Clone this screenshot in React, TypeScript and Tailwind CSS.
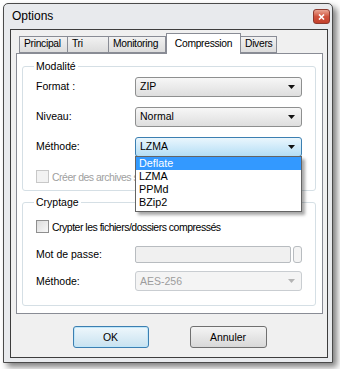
import type { ReactNode } from "react";

function Arrow({ disabled = false }: { disabled?: boolean }) {
  return (
    <svg width="7" height="4" viewBox="0 0 7 4" className="shrink-0">
      <path d="M0 0h7L3.5 4z" fill={disabled ? "#b4b4b4" : "#111"} />
    </svg>
  );
}

function Combo({ value, open = false, disabled = false }: { value: string; open?: boolean; disabled?: boolean }) {
  const look = disabled
    ? "border-[#c9cdd1] bg-[#f4f4f4] text-[#9c9c9c]"
    : open
      ? "border-[#3c7fb1] bg-gradient-to-b from-[#eaf6fd] to-[#b4def5] text-black"
      : "border-[#8e8f8f] bg-gradient-to-b from-[#f7f7f7] to-[#dedede] text-black";
  return (
    <div className={`w-[167px] h-[20px] rounded-[3px] border flex items-center justify-between pl-[4px] pr-[6px] ${look}`}>
      <span>{value}</span>
      <Arrow disabled={disabled} />
    </div>
  );
}

function Checkbox({ label, disabled = false }: { label: string; disabled?: boolean }) {
  return (
    <div className={`flex items-center gap-[3px] ${disabled ? "text-[#a0a0a0]" : "text-black"}`}>
      <span
        className={`w-[13px] h-[13px] border ${
          disabled ? "border-[#c8c8c8] bg-[#f2f2f2]" : "border-[#8f8f8f] bg-gradient-to-br from-[#dcdcdc] to-[#f8f8f8]"
        }`}
      />
      <span className="tracking-[-0.5px]">{label}</span>
    </div>
  );
}

function Row({ label, children }: { label: string; children: ReactNode }) {
  return (
    <div className="flex items-center">
      <span className="w-[105px] pl-[6px]">{label}</span>
      {children}
    </div>
  );
}

function Group({ title, children }: { title: string; children: ReactNode }) {
  return (
    <fieldset className="border border-[#d5dfe5] rounded-[3px] px-[7px] shadow-[inset_1px_1px_0_#fff]">
      <legend className="px-[2px] ml-[4px] text-black">{title}</legend>
      {children}
    </fieldset>
  );
}

const tabs = [
  { name: "Principal", w: "w-[49px]" },
  { name: "Tri", w: "w-[42px]" },
  { name: "Monitoring", w: "w-[58px]" },
  { name: "Compression", w: "w-[75px]" },
  { name: "Divers", w: "w-[37px]" },
];

export default function App() {
  return (
    <div className="w-[340px] h-[369px] bg-white pt-[3px] pl-[3px] text-[10.5px] leading-[16.5px] font-['Liberation_Sans',Arial,sans-serif]">
      <div className="w-[330px] h-[360px] border border-[#4a4a4a] rounded-t-[5px] bg-[#e8eaed] shadow-[4px_4px_6px_rgba(0,0,0,0.5)] flex flex-col">
        {/* title bar */}
        <div className="h-[25px] flex items-center justify-between pl-[8px] pr-[2px]">
          <span className="text-[12px] text-black">Options</span>
          <div className="w-[17px] h-[15px] rounded-[3px] border border-[#8d3a2f] bg-gradient-to-b from-[#e8a493] via-[#d0533e] to-[#c4402b] flex items-center justify-center">
            <svg width="7" height="6" viewBox="0 0 7 6">
              <path d="M1 0.5l5 5M6 0.5l-5 5" stroke="#fff" strokeWidth="1.6" />
            </svg>
          </div>
        </div>

        {/* client area */}
        <div className="ml-[6px] mr-[4px] mb-[4px] flex-1 border border-[#3d3d3d] bg-[#f0f0f0] flex flex-col pl-[5px] pr-[4px] pt-[3px]">
          {/* tab strip */}
          <div className="flex items-end h-[20px] pl-[3px] text-[10.3px] tracking-[-0.3px]">
            {tabs.map((t) =>
              t.name === "Compression" ? (
                <div key={t.name} className={`${t.w} h-[21px] -mb-px border border-b-0 border-[#898c95] bg-white flex items-center justify-center text-black z-10`}>
                  {t.name}
                </div>
              ) : (
                <div key={t.name} className={`${t.w} h-[17px] border border-[#898c95] -ml-px first:ml-0 bg-gradient-to-b from-[#f2f2f2] to-[#dcdcdc] flex items-center pl-[4px] text-black`}>
                  {t.name}
                </div>
              ),
            )}
          </div>

          {/* tab panel */}
          <div className="h-[261px] border border-[#898c95] bg-white pl-[5px] pr-[6px] pt-[4px] flex flex-col gap-[3px]">
            <Group title="Modalité">
              <div className="relative flex flex-col gap-[10px] pt-[2px] pb-[5px]">
                <Row label="Format :">
                  <Combo value="ZIP" />
                </Row>
                <Row label="Niveau:">
                  <Combo value="Normal" />
                </Row>
                <Row label="Méthode:">
                  <Combo value="LZMA" open />
                </Row>
                <div className="pl-[6px] mt-[2px]">
                  <Checkbox label="Créer des archives solides" disabled />
                </div>

                {/* open dropdown list */}
                <div className="absolute left-[105px] top-[81px] w-[167px] border border-[#646464] bg-white shadow-[3px_3px_3px_rgba(0,0,0,0.35)] text-[10.8px] leading-[13px] z-20">
                  <div className="bg-[#3399ff] text-white pl-[3px]">Deflate</div>
                  <div className="pl-[3px]">LZMA</div>
                  <div className="pl-[3px]">PPMd</div>
                  <div className="pl-[3px] pb-[2px]">BZip2</div>
                </div>
              </div>
            </Group>

            <Group title="Cryptage">
              <div className="flex flex-col pt-[8px] pb-[14px]">
                <div className="pl-[6px]">
                  <Checkbox label="Crypter les fichiers/dossiers compressés" />
                </div>
                <div className="mt-[11px]">
                  <Row label="Mot de passe:">
                    <div className="w-[156px] h-[17px] rounded-[2px] border border-[#b8bcc0] bg-[#f0f0f0]" />
                    <div className="ml-[2px] w-[9px] h-[17px] rounded-[3px] border border-[#b8bcc0] bg-[#f4f4f4]" />
                  </Row>
                </div>
                <div className="mt-[8px]">
                  <Row label="Méthode:">
                    <Combo value="AES-256" disabled />
                  </Row>
                </div>
              </div>
            </Group>
          </div>

          {/* buttons */}
          <div className="flex justify-center gap-[41px] pt-[12px]">
            <button className="w-[76px] h-[22px] rounded-[3px] border border-[#3c7fb1] bg-gradient-to-b from-[#eef7fc] to-[#c8e2f0] shadow-[inset_0_0_0_1px_#bfe6f9] text-black">
              OK
            </button>
            <button className="w-[77px] h-[22px] rounded-[3px] border border-[#707070] bg-gradient-to-b from-[#f4f4f4] to-[#d8d8d8] text-black">
              Annuler
            </button>
          </div>
        </div>
      </div>
    </div>
  );
}
